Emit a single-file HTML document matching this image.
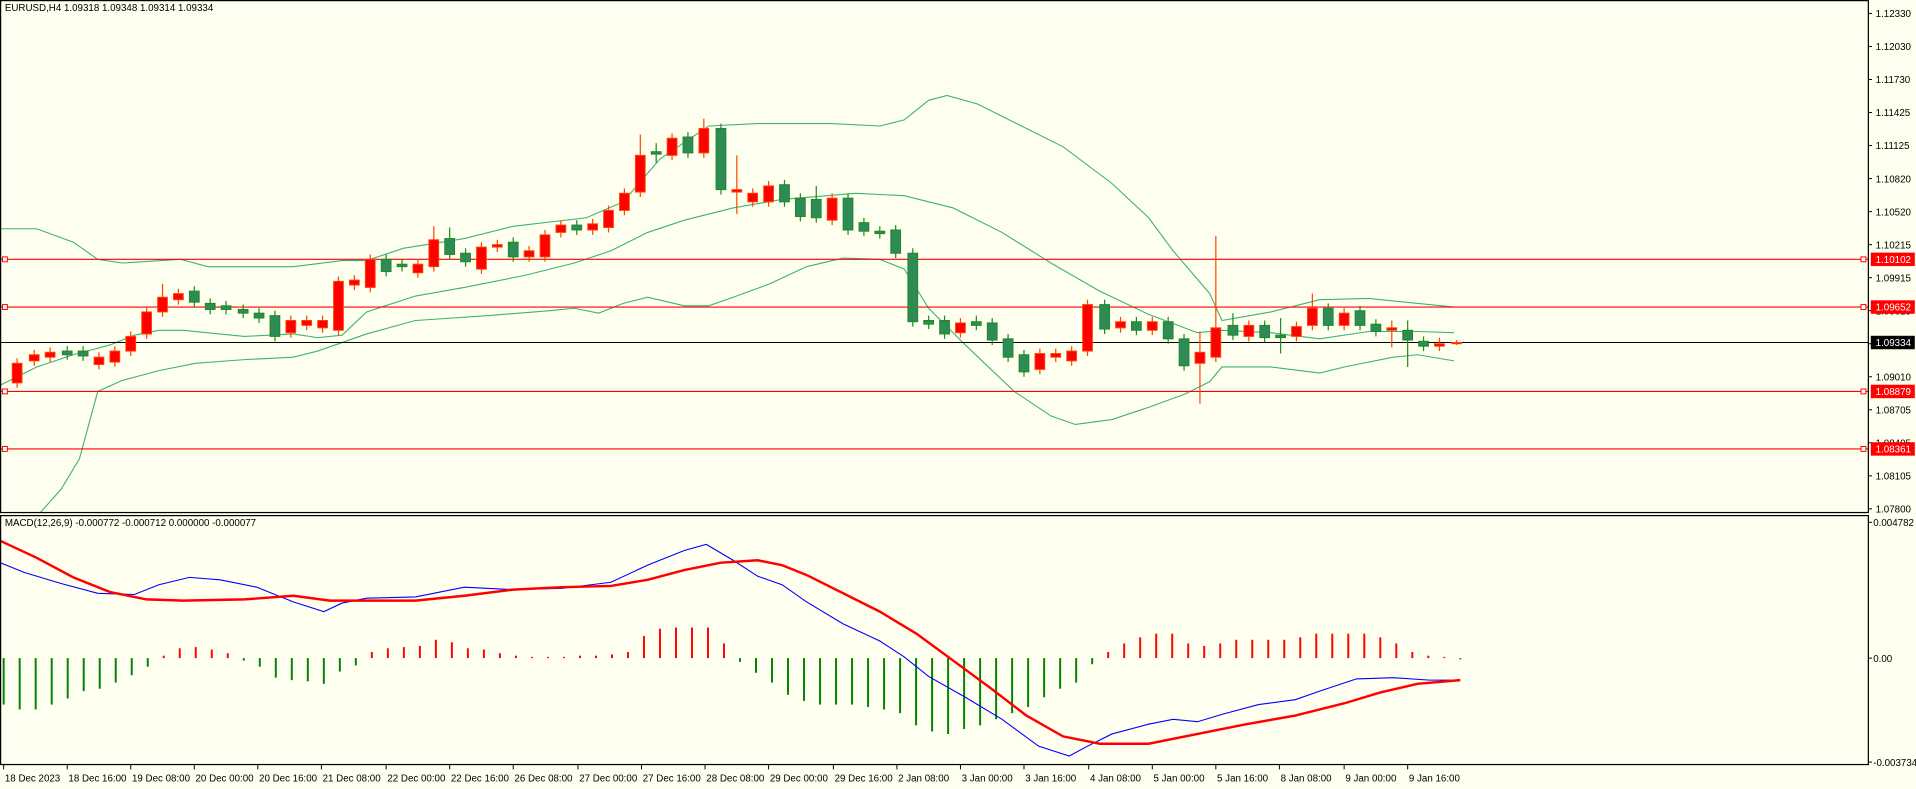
<!DOCTYPE html>
<html><head><meta charset="utf-8">
<style>
html,body{margin:0;padding:0;background:#fffff0;overflow:hidden}
svg{display:block}
text{font-family:"Liberation Sans",Tahoma,sans-serif;font-size:8px;fill:#000}
</style></head>
<body>
<svg id="s" width="1916" height="789" viewBox="0 0 1568 645" preserveAspectRatio="none" xmlns="http://www.w3.org/2000/svg">
<rect width="1568" height="645" fill="#fffff0"/>
<g id="bands" fill="none" stroke="#3cb371" stroke-width="0.9"></g>
<g id="lines"></g>
<g id="candles"></g>
<g id="macd"></g>
<g id="axes"></g>
<text x="4" y="9">EURUSD,H4  1.09318 1.09348 1.09314 1.09334</text>
<text x="4" y="430">MACD(12,26,9) -0.000772 -0.000712 0.000000 -0.000077</text>
</svg>
<script>
const NS="http://www.w3.org/2000/svg";
function el(p,t,a,txt){const e=document.createElementNS(NS,t);for(const k in a)e.setAttribute(k,a[k]);if(txt!==undefined)e.textContent=txt;document.getElementById(p).appendChild(e);return e;}
function pl(p,pts,st,w){el(p,'polyline',{points:pts.map(q=>q.join(',')).join(' '),fill:'none',stroke:st,'stroke-width':w});}
const up=[[0,187],[30,187],[60,198],[80,212],[100,215],[148,212],[170,218],[240,218],[280,213],[300,213],[330,203],[380,195],[420,185],[480,178],[510,165],[540,130],[580,103],[620,101],[680,101],[720,103],[740,98],[760,82],[775,78],[800,85],[830,100],[870,120],[910,150],[940,178],[960,205],[990,240],[1000,262],[1040,255],[1080,245],[1120,244],[1190,251]];
const mid=[[0,315],[30,300],[60,290],[90,282],[110,274],[130,270],[150,270],[200,275],[240,273],[260,276],[280,274],[300,255],[340,242],[380,235],[430,225],[470,215],[500,205],[530,190],[560,180],[600,170],[640,163],[700,158],[740,160],[780,170],[820,190],[860,215],[900,238],[940,257],[980,272],[1000,270],[1040,272],[1080,277],[1120,271],[1160,271],[1190,272]];
const lo=[[33,419],[50,400],[65,375],[80,320],[100,311],[130,303],[160,297],[200,294],[240,292],[260,287],[300,273],[340,262],[400,258],[450,254],[470,252],[490,256],[510,248],[530,243],[560,250],[580,250],[600,243],[630,232],[660,218],[690,211],[720,212],[740,220],[760,252],[790,282],[830,320],[860,340],[880,347],[910,343],[940,333],[970,322],[990,312],[1000,300],[1040,300],[1080,305],[1100,300],[1140,292],[1160,290],[1190,295]];
pl('bands',up,'#3cb371',0.9);pl('bands',mid,'#3cb371',0.9);pl('bands',lo,'#3cb371',0.9);
[[212,'#f00','1.10102'],[251,'#f00','1.09652'],[280,'#000','1.09334'],[320,'#f00','1.08879'],[367,'#f00','1.08361']].forEach(h=>{
 el('lines','line',{x1:0,x2:1529,y1:h[0],y2:h[0],stroke:h[1],'stroke-width':0.9});
 if(h[1]!='#000'){el('lines','rect',{x:2,y:h[0]-2,width:4,height:4,fill:'#fffff0',stroke:h[1],'stroke-width':0.8});el('lines','rect',{x:1523,y:h[0]-2,width:4,height:4,fill:'#fffff0',stroke:h[1],'stroke-width':0.8});}
});
const C=[[14,297,313,'r'],[28,290,295,'r'],[41,288,292,'r'],[55,287,290,'g'],[68,287,291,'g'],[81,292,298,'r'],[94,287,296,'r'],[107,275,287,'r'],[120,255,273,'r'],[133,243,255,'r',232],[146,240,245,'r'],[159,238,247,'g'],[172,248,253,'g'],[185,250,253,'g'],[199,253,256,'g'],[212,256,260,'g'],[225,258,275,'g'],[238,262,272,'r'],[251,262,266,'r'],[264,262,268,'r'],[277,230,270,'r'],[290,229,233,'r'],[303,212,235,'r'],[316,212,222,'g'],[329,216,218,'g'],[342,216,223,'r'],[355,196,218,'r',185],[368,195,208,'g',186],[381,207,214,'g'],[394,202,220,'r'],[407,200,202,'r'],[420,198,210,'g'],[433,205,210,'r'],[446,192,210,'r'],[459,184,190,'r'],[472,184,188,'g'],[485,183,188,'r'],[498,172,186,'r'],[511,158,172,'r'],[524,127,157,'r',110],[537,124,126,'g',117,133],[550,113,127,'r'],[563,112,125,'g'],[576,105,125,'r',97],[590,105,155,'g'],[603,155,157,'r',127,175],[616,158,165,'r'],[629,152,165,'r'],[642,151,165,'g'],[655,162,177,'g'],[668,163,178,'g',152],[681,162,180,'r'],[694,162,188,'g'],[707,182,189,'g'],[720,189,191,'g'],[733,188,207,'g'],[747,207,263,'g'],[760,262,265,'g'],[773,262,273,'g'],[786,264,272,'r'],[799,263,266,'g',258],[812,264,278,'g'],[825,277,292,'g'],[838,290,304,'g'],[851,289,302,'r'],[864,289,292,'r'],[877,287,295,'r'],[890,249,287,'r'],[904,249,269,'g'],[917,263,268,'r'],[930,263,270,'g'],[943,263,270,'r'],[956,263,277,'g'],[969,277,299,'g'],[982,288,297,'r',271,330],[995,268,292,'r',193],[1009,266,274,'g',256],[1022,266,275,'r'],[1035,266,276,'g'],[1048,274,276,'g',260,289],[1061,267,275,'r'],[1074,252,266,'r',240],[1087,252,266,'g'],[1100,256,266,'r'],[1113,254,266,'g'],[1126,265,271,'g'],[1139,268,270,'r',262,284],[1152,270,278,'g',262,300],[1165,279,283,'g'],[1178,281,283,'r',276,287],[1192,280,281,'r',278,282]];
C.forEach(c=>{const[x,t,b,col]=c;const hi=c[4]||t-4,lw=c[5]||b+4;
 const st=col=='r'?'#ff4500':'#1f8a1f',fi=col=='r'?'#ff0000':'#2e8b57';
 el('candles','line',{x1:x,x2:x,y1:hi,y2:lw,stroke:st,'stroke-width':1});
 el('candles','rect',{x:x-4,y:t,width:8,height:Math.max(b-t,1),fill:fi,stroke:st,'stroke-width':0.8});
});
const H=[-38,-42,-42,-38,-33,-27,-25,-20,-14,-7,2,8,9,7,4,-2,-7,-16,-18,-19,-21,-11,-6,5,8,9,10,15,13,8,7,4,2,1,1,1,2,2,3,5,18,24,25,25,25,12,-3,-12,-20,-30,-35,-38,-38,-38,-40,-42,-45,-55,-60,-62,-58,-55,-50,-45,-40,-32,-25,-20,-5,5,12,17,20,20,12,10,12,15,15,15,15,17,20,20,20,20,17,12,5,2,1,-1];
H.forEach((h,i)=>{const x=3+13.1*i;el('macd','line',{x1:x,x2:x,y1:538,y2:538-h,stroke:h>0?'#ff0000':'#008000','stroke-width':1.6});});
pl('macd',[[0,460],[20,468],[50,477],[80,485],[110,486],[130,478],[155,472],[180,474],[210,480],[240,492],[265,500],[280,493],[300,489],[340,488],[380,480],[420,482],[460,481],[500,476],[530,462],[560,450],[578,445],[600,458],[620,471],[640,478],[660,492],[690,510],[720,524],[740,537],[760,553],[790,570],[820,588],[850,610],[875,618],[890,610],[910,600],[940,592],[960,588],[980,590],[1000,584],[1030,576],[1060,572],[1080,565],[1110,555],[1140,554],[1170,556],[1195,556]],'#0000ff',0.9);
pl('macd',[[0,442],[30,456],[60,472],[90,484],[120,490],[150,491],[200,490],[240,487],[270,491],[300,491],[340,491],[380,487],[420,482],[460,480],[500,479],[530,474],[560,466],[590,460],[620,458],[640,462],[660,470],[690,485],[720,500],[750,518],[780,540],[810,562],[840,585],[870,602],[900,608],[940,608],[980,600],[1020,592],[1060,585],[1100,575],[1130,566],[1160,559],[1195,556]],'#ff0000',2);
el('axes','rect',{x:0.5,y:0.5,width:1528.5,height:418.5,fill:'none',stroke:'#000','stroke-width':1});
el('axes','rect',{x:0.5,y:421.5,width:1528.5,height:203.5,fill:'none',stroke:'#000','stroke-width':1});
const P=['1.12330','1.12030','1.11730','1.11425','1.11125','1.10820','1.10520','1.10215','1.09915','1.09615','1.09315','1.09010','1.08705','1.08405','1.08105','1.07800'];
P.forEach((p,i)=>{const y=11+27*i;el('axes','line',{x1:1529,x2:1532,y1:y,y2:y,stroke:'#000','stroke-width':0.8});el('axes','text',{x:1535,y:y+3},p);});
[[427,'0.004782'],[538,'0.00'],[623,'-0.003734']].forEach(m=>{el('axes','line',{x1:1529,x2:1532,y1:m[0],y2:m[0],stroke:'#000','stroke-width':0.8});el('axes','text',{x:1533,y:m[0]+3},m[1]);});
[[212,'#f00','1.10102'],[251,'#f00','1.09652'],[280,'#000','1.09334'],[320,'#f00','1.08879'],[367,'#f00','1.08361']].forEach(h=>{
 el('axes','rect',{x:1531,y:h[0]-5.5,width:36,height:11,fill:h[1]});el('axes','text',{x:1535,y:h[0]+3,style:'fill:#fff'},h[2]);});
const T=[[3,'18 Dec 2023'],[55,'18 Dec 16:00'],[107,'19 Dec 08:00'],[159,'20 Dec 00:00'],[211,'20 Dec 16:00'],[263,'21 Dec 08:00'],[316,'22 Dec 00:00'],[368,'22 Dec 16:00'],[420,'26 Dec 08:00'],[473,'27 Dec 00:00'],[525,'27 Dec 16:00'],[577,'28 Dec 08:00'],[629,'29 Dec 00:00'],[682,'29 Dec 16:00'],[734,'2 Jan 08:00'],[786,'3 Jan 00:00'],[838,'3 Jan 16:00'],[891,'4 Jan 08:00'],[943,'5 Jan 00:00'],[995,'5 Jan 16:00'],[1047,'8 Jan 08:00'],[1100,'9 Jan 00:00'],[1152,'9 Jan 16:00']];
T.forEach(t=>{el('axes','line',{x1:t[0],x2:t[0],y1:625,y2:629,stroke:'#000','stroke-width':0.8});el('axes','text',{x:t[0]+1,y:639},t[1]);});
</script>
</body></html>
